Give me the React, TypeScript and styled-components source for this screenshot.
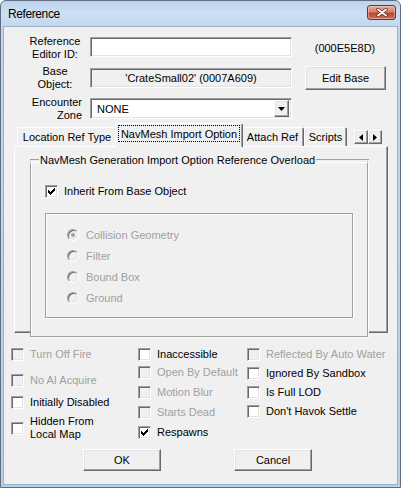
import React from "react";
import styled, { createGlobalStyle } from "styled-components";

const GlobalStyle = createGlobalStyle`
  html, body {
    margin: 0;
    padding: 0;
    background: #ffffff;
  }
  body {
    font-family: "Liberation Sans", Arial, sans-serif;
    font-size: 11px;
    color: #000;
  }
  * {
    box-sizing: border-box;
  }
`;

type Item = { label: string; checked?: boolean; disabled?: boolean; mt?: number };

const leftFlags: Item[] = [
  { label: "Turn Off Fire", disabled: true },
  { label: "No AI Acquire", disabled: true, mt: 13 },
  { label: "Initially Disabled", mt: 9 },
  { label: "Hidden From\nLocal Map", mt: 6 },
];

const middleFlags: Item[] = [
  { label: "Inaccessible" },
  { label: "Open By Default", disabled: true, mt: 5 },
  { label: "Motion Blur", disabled: true, mt: 7 },
  { label: "Starts Dead", disabled: true, mt: 7 },
  { label: "Respawns", checked: true, mt: 7 },
];

const rightFlags: Item[] = [
  { label: "Reflected By Auto Water", disabled: true },
  { label: "Ignored By Sandbox", mt: 6 },
  { label: "Is Full LOD", mt: 6 },
  { label: "Don't Havok Settle", mt: 6 },
];

const importOptions = ["Collision Geometry", "Filter", "Bound Box", "Ground"];

function CheckMark() {
  return (
    <svg width="7" height="7" viewBox="0 0 7 7" shapeRendering="crispEdges">
      <path d="M0 2h1v1h1v1h1V3h1V2h1V1h1V0h1v3H6v1H5v1H4v1H3v1H2V6H1V5H0z" fill="#000" />
    </svg>
  );
}

function Check({ item }: { item: Item }) {
  return (
    <CheckRow $mt={item.mt ?? 0} $disabled={item.disabled}>
      <CheckBox $disabled={item.disabled}>{item.checked && <CheckMark />}</CheckBox>
      <span>{item.label}</span>
    </CheckRow>
  );
}

function App() {
  return (
    <>
      <GlobalStyle />
      <Window>
        <TitleBar>
          <Title>Reference</Title>
          <CloseButton>
            <svg width="12" height="9" viewBox="0 0 12 9">
              <path d="M2 1.5 L10 7.5 M10 1.5 L2 7.5" stroke="#5a1d14" strokeWidth="3.4" strokeLinecap="round" />
              <path d="M2 1.5 L10 7.5 M10 1.5 L2 7.5" stroke="#ffffff" strokeWidth="2" strokeLinecap="round" />
            </svg>
          </CloseButton>
        </TitleBar>

        <Client>
          <FormGrid>
            <FieldLabel>
              Reference
              <br />
              Editor ID:
            </FieldLabel>
            <Field />
            <IdText>(000E5E8D)</IdText>

            <FieldLabel>
              Base
              <br />
              Object:
            </FieldLabel>
            <Field $readOnly>'CrateSmall02' (0007A609)</Field>
            <PushButton $width={81} $height={24}>Edit Base</PushButton>

            <FieldLabel $align="right">
              Encounter
              <br />
              Zone
            </FieldLabel>
            <Combo>
              <span>NONE</span>
              <ComboButton>
                <svg width="7" height="4" viewBox="0 0 7 4">
                  <polygon points="0,0 7,0 3.5,4" fill="#000" />
                </svg>
              </ComboButton>
            </Combo>
          </FormGrid>

          <TabArea>
            <TabStrip>
              <Tab $width={100}>Location Ref Type</Tab>
              <Tab $width={128} $active>
                <FocusLabel>NavMesh Import Option</FocusLabel>
              </Tab>
              <Tab $width={63}>Attach Ref</Tab>
              <Tab $width={43}>Scripts</Tab>
              <Spacer />
              <ScrollButton>
                <svg width="4" height="7" viewBox="0 0 4 7">
                  <polygon points="4,0 4,7 0,3.5" fill="#000" />
                </svg>
              </ScrollButton>
              <ScrollButton>
                <svg width="4" height="7" viewBox="0 0 4 7">
                  <polygon points="0,0 0,7 4,3.5" fill="#000" />
                </svg>
              </ScrollButton>
            </TabStrip>

            <TabPanel>
              <GroupBox>
                <GroupTitle>
                  <span>NavMesh Generation Import Option Reference Overload</span>
                </GroupTitle>
                <GroupBody>
                  <Check item={{ label: "Inherit From Base Object", checked: true }} />
                  <OptionFrame>
                    {importOptions.map((label, i) => (
                      <RadioRow key={label}>
                        <Radio $checked={i === 0} />
                        <span>{label}</span>
                      </RadioRow>
                    ))}
                  </OptionFrame>
                </GroupBody>
              </GroupBox>
            </TabPanel>
          </TabArea>

          <FlagGrid>
            {[leftFlags, middleFlags, rightFlags].map((col, i) => (
              <FlagColumn key={i}>
                {col.map((item) => (
                  <Check key={item.label} item={item} />
                ))}
              </FlagColumn>
            ))}
          </FlagGrid>

          <ButtonRow>
            <PushButton $width={78} $height={22}>OK</PushButton>
            <PushButton $width={78} $height={22}>Cancel</PushButton>
          </ButtonRow>
        </Client>
      </Window>
    </>
  );
}

const Window = styled.div`
  width: 401px;
  height: 488px;
  display: flex;
  flex-direction: column;
  border: 1px solid #5f6e82;
  border-radius: 6px 6px 0 0;
  padding: 0 3px 3px;
  background: linear-gradient(180deg, #bcd2ec 0px, #cddff2 12px, #c2d7ef 26px, #b8cfea 100%);
`;

const TitleBar = styled.div`
  height: 26px;
  display: flex;
  align-items: flex-start;
  justify-content: space-between;
  padding: 0 1px 0 4px;
`;

const Title = styled.div`
  margin-top: 6px;
  font-size: 12px;
  letter-spacing: -0.4px;
  line-height: 15px;
`;

const CloseButton = styled.div`
  margin-top: 4px;
  width: 29px;
  height: 15px;
  display: flex;
  align-items: center;
  justify-content: center;
  border: 1px solid #7a2e22;
  border-radius: 3px;
  background: linear-gradient(180deg, #e7aa9a 0%, #d7806c 45%, #c2442d 55%, #d27055 100%);
  box-shadow: inset 0 0 0 1px rgba(255, 255, 255, 0.35);
`;

const Client = styled.div`
  flex: 1;
  display: flex;
  flex-direction: column;
  padding-top: 10px;
  background: #f0f0f0;
  box-shadow: 0 0 0 1px #9cb1c9;
`;

const FormGrid = styled.div`
  display: grid;
  grid-template-columns: 54px 202px 86px;
  grid-template-rows: 21px 24px 21px;
  column-gap: 8px;
  row-gap: 8px;
  padding-left: 24px;
`;

const FieldLabel = styled.div<{ $align?: "center" | "right" }>`
  align-self: center;
  text-align: ${(p) => p.$align ?? "center"};
  line-height: 13px;
`;

const Sunken = styled.div`
  border: 1px solid;
  border-color: #a0a0a0 #ffffff #ffffff #a0a0a0;
  box-shadow: inset 1px 1px 0 #696969, inset -1px -1px 0 #e3e3e3;
`;

const Field = styled(Sunken)<{ $readOnly?: boolean }>`
  align-self: ${(p) => (p.$readOnly ? "center" : "start")};
  height: 20px;
  display: flex;
  align-items: center;
  justify-content: center;
  background: ${(p) => (p.$readOnly ? "#f0f0f0" : "#ffffff")};
`;

const IdText = styled.div`
  align-self: center;
  text-align: center;
  padding-left: 4px;
`;

const Raised = styled.div`
  display: flex;
  align-items: center;
  justify-content: center;
  background: #f0f0f0;
  border: 1px solid;
  border-color: #ffffff #696969 #696969 #ffffff;
  box-shadow: inset -1px -1px 0 #a0a0a0, inset 1px 1px 0 #e3e3e3;
`;

const PushButton = styled(Raised)<{ $width: number; $height: number }>`
  width: ${(p) => p.$width}px;
  height: ${(p) => p.$height}px;
  justify-self: end;
  align-self: center;
`;

const Combo = styled(Sunken)`
  height: 21px;
  display: flex;
  align-items: center;
  justify-content: space-between;
  padding: 0 2px 0 6px;
  background: #ffffff;
`;

const ComboButton = styled(Raised)`
  width: 15px;
  height: 17px;
`;

const TabArea = styled.div`
  margin: 4px 0 0 10px;
  width: 374px;
`;

const TabStrip = styled.div`
  height: 23px;
  display: flex;
  align-items: flex-end;
  padding: 0 6px 0 3px;
`;

const Tab = styled.div<{ $width: number; $active?: boolean }>`
  position: relative;
  z-index: ${(p) => (p.$active ? 1 : 0)};
  width: ${(p) => p.$width}px;
  height: ${(p) => (p.$active ? 24 : 19)}px;
  margin: ${(p) => (p.$active ? "0 -2px -1px" : "0")};
  padding: ${(p) => (p.$active ? "1px 2px 0 2px" : "0")};
  display: flex;
  align-items: ${(p) => (p.$active ? "flex-start" : "center")};
  justify-content: center;
  white-space: nowrap;
  background: #f0f0f0;
  border-style: solid;
  border-width: 1px 1px 0 1px;
  border-color: #ffffff #696969 #ffffff #ffffff;
  border-radius: 2px 2px 0 0;
  box-shadow: inset -1px 0 0 #a0a0a0;
`;

const FocusLabel = styled.span`
  width: 100%;
  height: 17px;
  display: flex;
  align-items: center;
  justify-content: center;
  border: 1px dotted #000;
`;

const Spacer = styled.div`
  flex: 1;
`;

const ScrollButton = styled(Raised)`
  width: 14px;
  height: 14px;
  margin-bottom: 2px;
`;

const TabPanel = styled.div`
  height: 187px;
  border: 1px solid;
  border-color: #ffffff #696969 #696969 #ffffff;
  box-shadow: inset -1px -1px 0 #a0a0a0;
`;

const GroupBox = styled.div`
  margin: 7px 0 0 15px;
  width: 338px;
  height: 183px;
  display: flex;
  flex-direction: column;
  background: #f0f0f0;
`;

const GroupTitle = styled.div`
  position: relative;
  z-index: 1;
  height: 13px;
  display: flex;
  align-items: center;
  line-height: 13px;

  & > span {
    padding: 0 1px;
  }

  &::before,
  &::after {
    content: "";
    height: 2px;
    border-top: 1px solid #a0a0a0;
    border-bottom: 1px solid #ffffff;
  }

  &::before {
    width: 9px;
  }

  &::after {
    flex: 1;
    margin-right: -1px;
  }
`;

const GroupBody = styled.div`
  flex: 1;
  margin-top: -6px;
  padding: 24px 0 0 14px;
  border: 1px solid #a0a0a0;
  border-top: none;
  box-shadow: 1px 1px 0 #ffffff, inset 1px 0 0 #ffffff;
`;

const OptionFrame = styled.div`
  margin-top: 15px;
  width: 308px;
  height: 105px;
  display: flex;
  flex-direction: column;
  gap: 9px;
  padding: 15px 0 0 21px;
  border: 1px solid #a0a0a0;
  box-shadow: 1px 1px 0 #ffffff, inset 1px 1px 0 #ffffff;
`;

const RadioRow = styled.div`
  height: 12px;
  display: flex;
  align-items: center;
  gap: 7px;
  color: #a0a0a0;
  line-height: 13px;
`;

const Radio = styled.span<{ $checked?: boolean }>`
  width: 12px;
  height: 12px;
  flex: none;
  display: flex;
  align-items: center;
  justify-content: center;
  border-radius: 50%;
  border: 1px solid;
  border-color: #a0a0a0 #ffffff #ffffff #a0a0a0;
  box-shadow: inset 1px 1px 0 #696969, inset -1px -1px 0 #e3e3e3;
  background: #f0f0f0;

  &::after {
    content: "";
    display: ${(p) => (p.$checked ? "block" : "none")};
    width: 4px;
    height: 4px;
    border-radius: 50%;
    background: #a0a0a0;
  }
`;

const CheckRow = styled.div<{ $mt: number; $disabled?: boolean }>`
  margin-top: ${(p) => p.$mt}px;
  display: flex;
  align-items: center;
  gap: 6px;
  line-height: 13px;
  white-space: pre-line;
  color: ${(p) => (p.$disabled ? "#a0a0a0" : "#000")};
`;

const CheckBox = styled.span<{ $disabled?: boolean }>`
  width: 13px;
  height: 13px;
  flex: none;
  display: flex;
  align-items: center;
  justify-content: center;
  border: 1px solid;
  border-color: #a0a0a0 #ffffff #ffffff #a0a0a0;
  box-shadow: inset 1px 1px 0 #696969, inset -1px -1px 0 #e3e3e3;
  background: ${(p) => (p.$disabled ? "#f0f0f0" : "#ffffff")};
`;

const FlagGrid = styled.div`
  margin: 15px 0 0 7px;
  display: grid;
  grid-template-columns: 127px 109px 1fr;
  align-items: start;
`;

const FlagColumn = styled.div`
  display: flex;
  flex-direction: column;
`;

const ButtonRow = styled.div`
  margin-top: 8px;
  display: flex;
  gap: 73px;
  padding-left: 79px;
`;

export default App;
